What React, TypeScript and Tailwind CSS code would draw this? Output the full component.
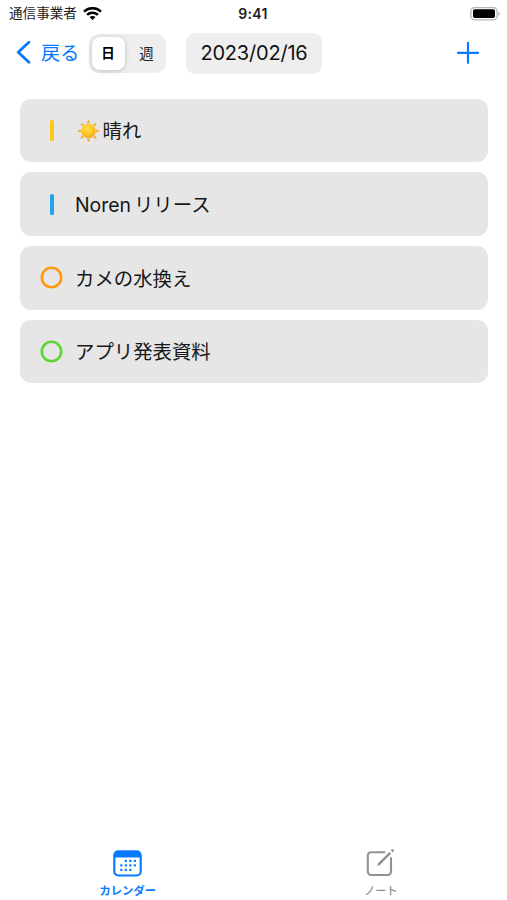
import type { ReactNode } from "react";

type Item = {
  id: string;
  title: ReactNode;
  icon?: ReactNode;
  mark: ReactNode;
};

function Bar({ className }: { className: string }) {
  return <span className={`h-[21px] w-1 rounded-[1.5px] ${className}`} />;
}

function Ring({ className }: { className: string }) {
  return (
    <svg className={`size-[23px] ${className}`} viewBox="0 0 23 23" fill="none">
      <circle cx="11.5" cy="11.5" r="9.7" stroke="currentColor" strokeWidth="2.6" />
    </svg>
  );
}

function SunIcon() {
  return (
    <svg className="mr-[3px] ml-[1.5px] size-[23px] shrink-0" viewBox="-12 -12.5 24 24">
      <defs>
        <radialGradient id="sun" cx="0.45" cy="0.35" r="0.65">
          <stop offset="0" stopColor="#ffe23f" />
          <stop offset="0.6" stopColor="#fdc52a" />
          <stop offset="1" stopColor="#f5a01d" />
        </radialGradient>
      </defs>
      {[0, 45, 90, 135, 180, 225, 270, 315].map((angle) => (
        <path key={angle} d="M-1.9 -8.1 L0 -11.8 L1.9 -8.1 Z" fill="#f8ae2b" transform={`rotate(${angle})`} />
      ))}
      <circle r="7.5" fill="url(#sun)" />
    </svg>
  );
}

const items: Item[] = [
  { id: "weather", title: "晴れ", icon: <SunIcon />, mark: <Bar className="bg-[#fdc61b]" /> },
  {
    id: "release",
    title: (
      <>
        <span className="mr-[3px]">Noren</span>リリース
      </>
    ),
    mark: <Bar className="bg-[#20a5ee]" />,
  },
  { id: "turtle", title: "カメの水換え", mark: <Ring className="text-[#ff980b]" /> },
  { id: "slides", title: "アプリ発表資料", mark: <Ring className="text-[#5bd634]" /> },
];

function StatusBar() {
  return (
    <div className="grid h-[27px] grid-cols-3 items-center pr-[7px] pl-[9px] text-[#1c1c1c]">
      <div className="flex items-center gap-[6px]">
        <span className="pt-px text-[13.6px] leading-none whitespace-nowrap">通信事業者</span>
        <svg className="h-[14px] w-[19px]" viewBox="0 0 19 14" fill="none" stroke="#000" strokeWidth="2.5">
          <path d="M1 4.6C5.7.1 13.3.1 18 4.6" />
          <path d="M4.1 7.9C7.1 5.1 11.9 5.1 14.9 7.9" />
          <path d="M6.5 10.1C8.2 8.6 10.8 8.6 12.5 10.1L9.5 13Z" fill="#000" stroke="none" />
        </svg>
      </div>
      <span className="pt-px pr-[3px] text-center text-[14px] leading-none font-semibold tracking-[0.3px]">9:41</span>
      <svg className="h-[14px] w-[30px] justify-self-end" viewBox="0 0 30 14">
        <rect x="0.9" y="0.5" width="26.2" height="12.4" rx="3.8" fill="#fff" stroke="#b5b5b5" strokeWidth="1.3" />
        <rect x="3" y="2.3" width="22" height="8.8" rx="1.8" fill="#000" />
        <path d="M28.4 4.7V8.9C30.2 8.3 30.2 5.3 28.4 4.7Z" fill="#b5b5b5" />
      </svg>
    </div>
  );
}

function Toolbar() {
  return (
    <header className="flex h-[52px] items-center pr-7 pl-4">
      <button className="flex items-center gap-[9px] text-[#087aff]">
        <svg className="h-[24px] w-4" viewBox="0 0 16 24" fill="none" stroke="currentColor" strokeWidth="2.8">
          <path d="M12.9 1.3L2.2 11.3L12.9 21.3" strokeLinecap="round" strokeLinejoin="round" />
        </svg>
        <span className="w-[38px] pt-px text-[19.2px] leading-none whitespace-nowrap">戻る</span>
      </button>
      <div className="ml-[10px] flex h-[39px] w-[77px] rounded-[10px] bg-[#eeeeef] p-[3px] text-[14.5px]">
        <button className="h-[33px] w-[33px] rounded-[8px] bg-white pt-px pr-[1px] text-[13.5px] font-bold text-black shadow-[0_1px_5px_rgba(0,0,0,0.2)]">
          日
        </button>
        <button className="flex-1 pt-px pl-[5px] text-[#222]">週</button>
      </div>
      <button className="ml-5 h-[41px] w-[136px] rounded-[9px] bg-[#eeeeef] text-[20px] tracking-[-0.2px] whitespace-nowrap text-[#111]">
        2023/02/16
      </button>
      <button className="ml-auto text-[#087aff]">
        <svg className="size-[22px]" viewBox="0 0 22 22" fill="none" stroke="currentColor" strokeWidth="2.2">
          <path d="M11 0.8V20.8M1 10.8H21" strokeLinecap="round" />
        </svg>
      </button>
    </header>
  );
}

function ItemCard({ item }: { item: Item }) {
  return (
    <li className="flex h-[63.7px] items-center rounded-[11px] bg-[#e6e6e6] pl-5 text-[19.4px] text-[#171717]">
      <span className="mr-3 flex w-[23px] justify-center">{item.mark}</span>
      {item.icon}
      <span className="pt-[3px] leading-none whitespace-nowrap">{item.title}</span>
    </li>
  );
}

function TabBar() {
  return (
    <nav className="mt-auto grid h-[56px] grid-cols-2">
      <button className="flex flex-col items-center pt-[5px] pl-[2px] text-[#087aff]">
        <svg className="h-[29px] w-[29px]" viewBox="0 0 29 29" fill="none">
          <rect x="1.3" y="2.3" width="26.4" height="24.2" rx="4" stroke="currentColor" strokeWidth="2.2" />
          <path d="M1.3 8.6V6C1.3 3.8 3 2.3 5 2.3H24C26 2.3 27.7 3.8 27.7 6V8.6Z" fill="currentColor" />
          <g fill="currentColor">
            {[11.7, 16.2, 20.7].map((x) => (
              <rect key={x} x={x} y="10.7" width="2.3" height="2.3" rx="0.7" />
            ))}
            {[7.2, 11.7, 16.2, 20.7].map((x) => (
              <rect key={x} x={x} y="15.2" width="2.3" height="2.3" rx="0.7" />
            ))}
            {[7.2, 11.7, 16.2].map((x) => (
              <rect key={x} x={x} y="19.7" width="2.3" height="2.3" rx="0.7" />
            ))}
          </g>
        </svg>
        <span className="mt-2 text-[11.3px] leading-none font-bold">カレンダー</span>
      </button>
      <button className="flex flex-col items-center pt-[3px] pl-px text-[#929292]">
        <svg className="h-[31px] w-[29px]" viewBox="0 0 29 31" fill="none" stroke="currentColor" strokeWidth="2.1">
          <path d="M18.5 5.3H5.5C3.2 5.3 1.8 6.7 1.8 9V24.3C1.8 26.6 3.2 28 5.5 28H21.3C23.6 28 25 26.6 25 24.3V11" strokeLinecap="round" />
          <path d="M12.5 17.7L24.2 5.9" strokeWidth="2.6" />
          <path d="M12.3 15.8L11.2 18.9L14.3 17.8Z" fill="currentColor" stroke="none" />
          <path d="M25.8 4.2L27.3 2.7" strokeWidth="2.9" />
        </svg>
        <span className="mt-2 text-[11.2px] leading-none font-medium">ノート</span>
      </button>
    </nav>
  );
}

export default function App() {
  return (
    <div className="flex h-screen flex-col bg-white font-['Inter','Noto_Sans_CJK_JP',sans-serif]">
      <StatusBar />
      <Toolbar />
      <ul className="mt-[19.5px] mr-[19.5px] ml-5 flex flex-col gap-[10px]">
        {items.map((item) => (
          <ItemCard key={item.id} item={item} />
        ))}
      </ul>
      <TabBar />
    </div>
  );
}
